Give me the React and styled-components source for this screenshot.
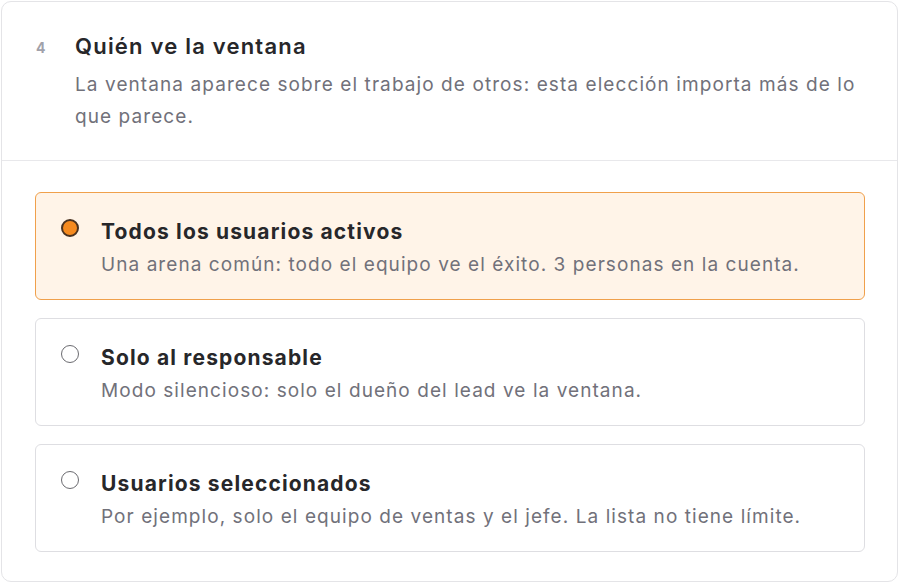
import React, { useState } from "react";
import styled, { createGlobalStyle } from "styled-components";

const GlobalStyle = createGlobalStyle`
    html, body {
        margin: 0;
        padding: 0;
        background: #ffffff;
    }
    body {
        font-family: Inter, "Noto Sans", sans-serif;
        -webkit-font-smoothing: antialiased;
    }
`;

const options = [
    {
        id: "all",
        title: "Todos los usuarios activos",
        desc: "Una arena común: todo el equipo ve el éxito. 3 personas en la cuenta.",
    },
    {
        id: "owner",
        title: "Solo al responsable",
        desc: "Modo silencioso: solo el dueño del lead ve la ventana.",
    },
    {
        id: "selected",
        title: "Usuarios seleccionados",
        desc: "Por ejemplo, solo el equipo de ventas y el jefe. La lista no tiene límite.",
    },
];

const App = () => {
    const [value, setValue] = useState("all");

    return (
        <>
            <GlobalStyle />
            <Page>
                <Card>
                    <Header>
                        <StepNumber>4</StepNumber>
                        <HeaderText>
                            <Title>Quién ve la ventana</Title>
                            <Subtitle>
                                La ventana aparece sobre el trabajo de otros: esta elección
                                importa más de lo que parece.
                            </Subtitle>
                        </HeaderText>
                    </Header>
                    <OptionList>
                        {options.map((opt) => (
                            <Option
                                key={opt.id}
                                $active={value === opt.id}
                                onClick={() => setValue(opt.id)}
                            >
                                <Radio $active={value === opt.id} />
                                <OptionText>
                                    <OptionTitle>{opt.title}</OptionTitle>
                                    <OptionDesc>{opt.desc}</OptionDesc>
                                </OptionText>
                            </Option>
                        ))}
                    </OptionList>
                </Card>
            </Page>
        </>
    );
};

const Page = styled.div`
    width: 900px;
    height: 584px;
    padding: 1px 2px 2px 1px;
    box-sizing: border-box;
`;

const Card = styled.div`
    height: 100%;
    box-sizing: border-box;
    border: 1px solid #e4e4e7;
    border-radius: 10px;
    background: #ffffff;
    display: flex;
    flex-direction: column;
`;

const Header = styled.div`
    display: flex;
    align-items: flex-start;
    padding: 29px 36px 27px 34px;
    border-bottom: 1px solid #e8e8eb;
`;

const StepNumber = styled.span`
    width: 39px;
    flex-shrink: 0;
    font-size: 14px;
    font-weight: 700;
    color: #a1a1aa;
    line-height: 34px;
`;

const HeaderText = styled.div`
    display: flex;
    flex-direction: column;
    gap: 8px;
`;

const Title = styled.h2`
    margin: 0;
    font-size: 22px;
    font-weight: 600;
    line-height: 30px;
    color: #27272a;
    letter-spacing: 0.055em;
`;

const Subtitle = styled.p`
    margin: 0;
    font-size: 19px;
    line-height: 32px;
    color: #71717a;
    letter-spacing: 0.057em;
`;

const OptionList = styled.div`
    display: flex;
    flex-direction: column;
    gap: 18px;
    padding: 31px 32px 30px 33px;
`;

const Option = styled.label`
    display: flex;
    align-items: flex-start;
    gap: 22px;
    height: 108px;
    box-sizing: border-box;
    padding: 26px 25px 20px;
    border: 1px solid ${(p) => (p.$active ? "#f0a04b" : "#dedee2")};
    background: ${(p) => (p.$active ? "#fff4e8" : "#ffffff")};
    border-radius: 6px;
    cursor: pointer;
`;

const Radio = styled.span`
    width: 18px;
    height: 18px;
    margin-top: 0;
    flex-shrink: 0;
    box-sizing: border-box;
    border-radius: 50%;
    border: ${(p) => (p.$active ? "2.5px solid #4a3220" : "1.5px solid #6b6b70")};
    background: ${(p) => (p.$active ? "#f58a1f" : "#ffffff")};
`;

const OptionText = styled.div`
    display: flex;
    flex-direction: column;
    gap: 6px;
`;

const OptionTitle = styled.span`
    font-size: 21px;
    font-weight: 700;
    line-height: 26px;
    color: #27272a;
    letter-spacing: 0.055em;
`;

const OptionDesc = styled.span`
    font-size: 19px;
    line-height: 28px;
    color: #71717a;
    letter-spacing: 0.056em;
`;

export default App;
